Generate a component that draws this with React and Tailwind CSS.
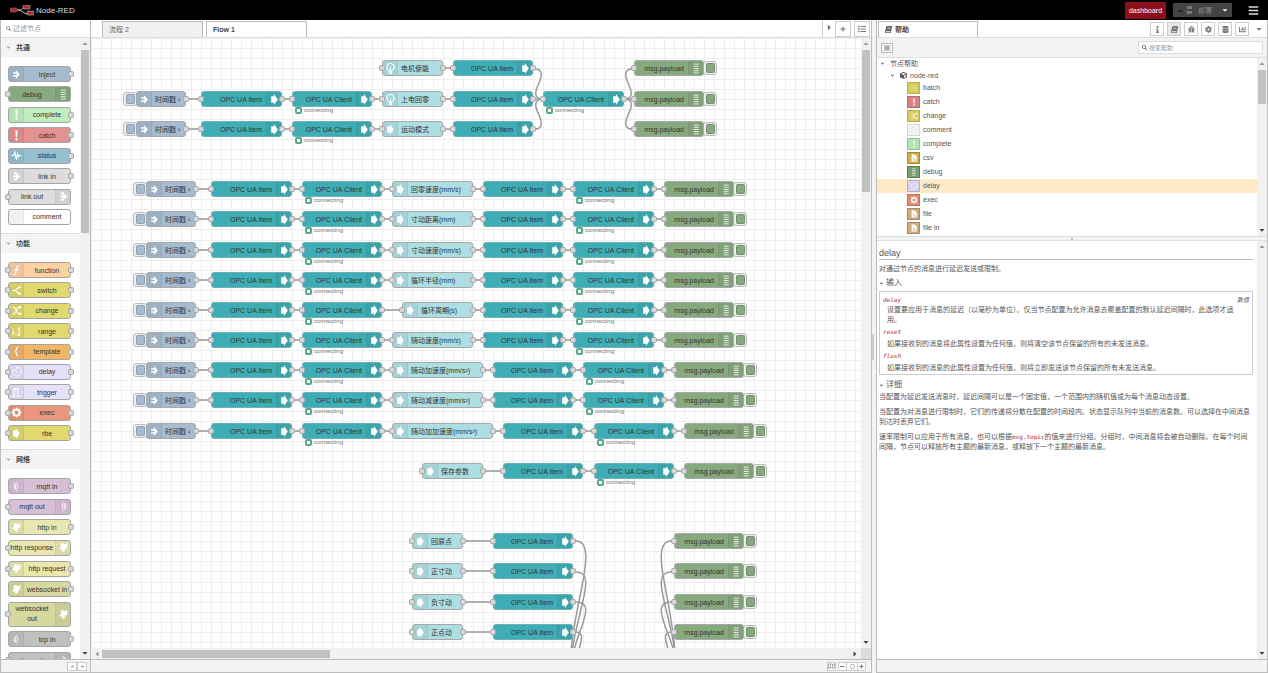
import { useState } from "react"
import { clsx } from "clsx"
import {
    FaAngleDown,
    FaBars,
    FaBook,
    FaBug,
    FaCaretDown,
    FaCaretRight,
    FaChartBar,
    FaCog,
    FaCube,
    FaDatabase,
    FaInfo,
    FaList,
    FaMinus,
    FaPlus,
    FaRegCircle,
    FaRegMap,
    FaSearch,
} from "react-icons/fa"

// One grid cell of the zoomed-out canvas
const CELL = 10.06
const gx = (u) => Math.round(u * CELL - 0.5)
const gy = (v) => Math.round(v * CELL + 0.3)

const TYPES = {
    inject: "bg-[#a6bbcf]",
    debug: "bg-[#87a980]",
    opc: "bg-[#3fadb5]",
    func: "bg-[#addee2]",
}

const item = (u) => ({ type: "opc", label: "OPC UA Item", icon: "arrow", right: true, from: u, to: u + 8 })
const client = (u) => ({ type: "opc", label: "OPC UA Client", icon: "arrow", right: true, from: u, to: u + 8, status: true })
const debug = (u) => ({ type: "debug", label: "msg.payload", icon: "debug", right: true, from: u, to: u + 7, button: true })
const inject = (u) => ({ type: "inject", label: "时间戳 ¹", icon: "inject", from: u, to: u + 5, button: true })
const func = (label, from, to, icon = "arrow") => ({ type: "func", label, icon, from, to })

const speedRow = (v, label, from, to) => ({
    v,
    nodes: [inject(5.5), item(12), client(21), func(label, from, to), item(to + 1), client(to + 10), debug(to + 19)],
})

const ROWS = [
    { v: 3, nodes: [func("电机使能", 29, 35, "bulb"), item(36)] },
    { v: 3, nodes: [debug(54)] },
    { v: 6, nodes: [inject(4.5), item(11), client(20), func("上电回零", 29, 35, "bulb"), item(36), client(45), debug(54)] },
    { v: 9, nodes: [inject(4.5), item(11), client(20), func("运动模式", 29, 35), item(36)] },
    { v: 9, nodes: [debug(54)] },
    speedRow(15, "回零速度(mm/s)", 30, 38),
    speedRow(18, "寸动距离(mm)", 30, 38),
    speedRow(21, "寸动速度(mm/s)", 30, 38),
    speedRow(24, "循环半径(mm)", 30, 38),
    speedRow(27, "循环周期(s)", 31, 38),
    speedRow(30, "随动速度(mm/s)", 30, 38),
    speedRow(33, "随动加速度(mm/s²)", 30, 39),
    speedRow(36, "随动减速度(mm/s²)", 30, 39),
    speedRow(39, "随动加加速度(mm/s³)", 30, 40),
    { v: 43, nodes: [func("保存参数", 33, 39), item(41), client(50), debug(59)] },
    { v: 50, nodes: [func("回原点", 32, 37), item(40)] },
    { v: 50, nodes: [debug(58)] },
    { v: 53, nodes: [func("正寸动", 32, 37), item(40)] },
    { v: 53, nodes: [debug(58)] },
    { v: 56, nodes: [func("负寸动", 32, 37), item(40)] },
    { v: 56, nodes: [debug(58)] },
    { v: 59, nodes: [func("正点动", 32, 37), item(40)] },
    { v: 59, nodes: [debug(58)] },
]

const CURVES = [
    "M444 31C452 31 451 38 448 45C444 53 442 61 452 61",
    "M444 91C452 91 451 84 448 77C444 69 442 61 452 61",
    "M541 31C533 31 534 38 537 45C541 53 543 61 533 61",
    "M541 91C533 91 534 84 537 77C541 69 543 61 533 61",
    "M485 503C499 503 495 528 491 548C487 570 482 588 480 614",
    "M485 534C499 534 495 550 491 567C487 585 483 598 481 614",
    "M485 564C499 564 495 576 491 588C487 598 484 606 483 614",
    "M485 594C493 594 491 602 487 614",
    "M580 503C566 503 570 528 574 548C578 570 582 588 584 614",
    "M580 534C566 534 570 550 574 567C578 585 582 598 584 614",
    "M580 564C566 564 570 576 574 588C578 598 581 606 583 614",
    "M580 594C572 594 574 602 578 614",
]

const CATEGORIES = [
    {
        name: "共通",
        height: "min-h-[159px]",
        nodes: [
            { label: "inject", color: "bg-[#a6bbcf]", icon: "inject", output: true },
            { label: "debug", color: "bg-[#87a980]", icon: "debug", input: true, right: true },
            { label: "complete", color: "bg-[#c0edc0]", icon: "alert", output: true },
            { label: "catch", color: "bg-[#e49191]", icon: "alert", output: true },
            { label: "status", color: "bg-[#94c1d0]", icon: "status", output: true },
            { label: "link in", color: "bg-[#dddddd]", icon: "link", output: true },
            { label: "link out", color: "bg-[#dddddd]", icon: "link", input: true, right: true },
            { label: "comment", color: "bg-white", icon: "comment" },
        ],
    },
    {
        name: "功能",
        height: "min-h-[179px]",
        nodes: [
            { label: "function", color: "bg-[#fdd0a2]", icon: "function", input: true, output: true },
            { label: "switch", color: "bg-[#e2d96e]", icon: "switch", input: true, output: true },
            { label: "change", color: "bg-[#e2d96e]", icon: "change", input: true, output: true },
            { label: "range", color: "bg-[#e2d96e]", icon: "range", input: true, output: true },
            { label: "template", color: "bg-[#f3b567]", icon: "template", input: true, output: true },
            { label: "delay", color: "bg-[#e6e0f8]", icon: "delay", input: true, output: true },
            { label: "trigger", color: "bg-[#e6e0f8]", icon: "trigger", input: true, output: true },
            { label: "exec", color: "bg-[#e9967a]", icon: "exec", input: true, output: true },
            { label: "rbe", color: "bg-[#e2d96e]", icon: "arrow", input: true, output: true },
        ],
    },
    {
        name: "网络",
        height: "min-h-[190px]",
        nodes: [
            { label: "mqtt in", color: "bg-[#d8bfd8]", icon: "bridge", output: true },
            { label: "mqtt out", color: "bg-[#d8bfd8]", icon: "bridgeOut", input: true, right: true },
            { label: "http in", color: "bg-[#e7e7ae]", icon: "globe", output: true },
            { label: "http response", color: "bg-[#e7e7ae]", icon: "globe", input: true, right: true },
            { label: "http request", color: "bg-[#e7e7ae]", icon: "globe", input: true, output: true },
            { label: "websocket in", color: "bg-[#d7d7a0]", icon: "globe", output: true },
            { label: "websocket out", color: "bg-[#d7d7a0]", icon: "globe", input: true, right: true, tall: true },
            { label: "tcp in", color: "bg-[#c0c0c0]", icon: "bridge", output: true },
            { label: "tcp out", color: "bg-[#c0c0c0]", icon: "bridgeOut", input: true, right: true },
        ],
    },
]

const HELP_NODES = [
    { label: "batch", color: "bg-[#d6cd5e] border-[#b9b04a]", icon: "batch" },
    { label: "catch", color: "bg-[#d98484] border-[#b86b6b]", icon: "alert" },
    { label: "change", color: "bg-[#d6cd5e] border-[#b9b04a]", icon: "change" },
    { label: "comment", color: "bg-[#f3f3f3] border-[#d5d5d5]", icon: "comment" },
    { label: "complete", color: "bg-[#b3e2b3] border-[#93c193]", icon: "alert" },
    { label: "csv", color: "bg-[#d0b04a] border-[#a88a2c]", icon: "file" },
    { label: "debug", color: "bg-[#7b9f75] border-[#5a7d55]", icon: "debug" },
    { label: "delay", color: "bg-[#d9d3ee] border-[#b5b0c8]", icon: "delay" },
    { label: "exec", color: "bg-[#e08a70] border-[#b97460]", icon: "exec" },
    { label: "file", color: "bg-[#d2aa78] border-[#a08a70]", icon: "file" },
    { label: "file in", color: "bg-[#d2aa78] border-[#a08a70]", icon: "file" },
]

const GLYPHS = {
    inject: <path fill="currentColor" d="M9 2l7 8-7 8v-4H4v-2.500h6v-3H4V6h5z" />,
    arrow: <path fill="currentColor" d="M4 4h5V0l7 10-7 10v-4H4z" />,
    debug: <path d="M5 2h9M5 6h9M5 10h9M5 14h9M5 18h9" strokeWidth="1.800" opacity=".8" />,
    alert: <path fill="currentColor" stroke="none" d="M8 1h4l-.8 12H8.800zM8.200 15h3.600v4H8.200z" />,
    status: <path d="M1 10h4l2-6 3 14 2-11 2 5 1-2h4" strokeWidth="2" />,
    link: <path fill="currentColor" stroke="none" d="M5 3l5-1 1 3 6 5-6 5-1 3-5-1v-3h4v-2H4V8h5V6H5z" />,
    comment: <path d="M10 4c4.500 0 7.500 2 7.500 5s-3 5-7.500 5c-1 0-2 0-2.500-.3L4 16.500l1-3.500C3.500 12 2.500 10.800 2.500 9c0-3 3-5 7.500-5z" strokeWidth="1.300" />,
    function: <path d="M15 2c-3-1-4.500 1-5 5L8.500 14c-.5 3-2 4.500-4.500 3.500M6 8.500h8" strokeWidth="2" />,
    switch: <path d="M2 10h5c3 0 3-6 10-6M7 10c3 0 3 6 10 6M14 2l3 2-3 2.500M14 13.500l3 2.500-3 2" strokeWidth="2" />,
    change: <path d="M3 4h3c3 0 4 12 8 12h3M3 16h3c3 0 4-12 8-12h3M15 2l3 2-3 2M15 14l3 2-3 2" strokeWidth="2" />,
    range: <path d="M4 8v8M4 4v2M9 13v3M12 5h3v12h-3M15 1v2" strokeWidth="2" />,
    template: <path d="M13 2c-3 0-3 1-3 4 0 2-.5 3.500-3 4 2.500.5 3 2 3 4 0 3 0 4 3 4" strokeWidth="2.200" />,
    delay: (
        <>
            <path d="M5 4.500a8 8 0 1 0 5-2.300v3" strokeWidth="1.500" />
            <path d="M6 7l4 4 2-1" strokeWidth="1.500" />
        </>
    ),
    trigger: <path d="M2 17h4V3h6v14h6" strokeWidth="2" />,
    exec: (
        <>
            <circle cx="10" cy="10" r="5.500" strokeWidth="3.500" />
            <path d="M10 1v3M10 16v3M1 10h3M16 10h3M3.600 3.600l2 2M14.400 14.400l2 2M3.600 16.400l2-2M14.400 5.600l2-2" strokeWidth="2.500" />
        </>
    ),
    bridge: <path d="M12 1c-5 4-5 14 0 18M8 4c-3 3-3 9 0 12M12 6v8" strokeWidth="1.500" />,
    bridgeOut: <path d="M8 1c5 4 5 14 0 18M12 4c3 3 3 9 0 12M8 6v8" strokeWidth="1.500" />,
    globe: <path fill="currentColor" stroke="none" d="M4 4l4-2 3 1 2 2 3-3 2 3-2 3 1 3-4 1v3l-3 3-3-1 1-4-3 1-3-2 2-2 2-2z" />,
    bulb: (
        <>
            <circle cx="10" cy="7.500" r="6.500" strokeWidth="2" />
            <path d="M8 13v6h4v-6M8 16h4M10 8v4" strokeWidth="2" />
        </>
    ),
    batch: <path d="M3 6l4 4-4 4M11 5h5M11 10h5M11 15h5M9 10h2" strokeWidth="1.500" />,
    file: <path fill="currentColor" fillRule="evenodd" stroke="none" d="M4 1h8l5 5v13H4zM7 9v2h3V9zM9 13v3h5v-3z" />,
}

function Glyph({ name, className }) {
    return (
        <svg viewBox="0 0 20 20" fill="none" stroke="currentColor" strokeWidth="0" className={className} aria-hidden="true">
            {GLYPHS[name]}
        </svg>
    )
}

function Port({ side }) {
    return (
        <span
            className={clsx(
                "absolute top-1/2 -mt-[3px] h-[6px] w-[6px] rounded-[2px] border border-[#aaa] bg-[#d9d9d9]",
                side === "left" ? "-left-[4px]" : "-right-[4px]"
            )}
        />
    )
}

function IconStrip({ icon, right, dim }) {
    return (
        <span
            className={clsx(
                "flex w-[15px] shrink-0 items-center justify-center self-stretch bg-black/5",
                dim ? "text-[#ddd]" : "text-white",
                right ? "order-2 rounded-r-[2px] border-l border-black/5" : "rounded-l-[2px] border-r border-black/5"
            )}
        >
            <Glyph name={icon} className="h-[11px] w-[11px]" />
        </span>
    )
}

function FlowNode({ node, v }) {
    const left = gx(node.from)
    const width = gx(node.to) - left
    return (
        <div className="absolute h-[16px]" style={{ left, top: gy(v) - 8, width }}>
            {node.button && (
                <button
                    aria-label={node.label}
                    className={clsx(
                        "absolute top-[1px] flex h-[14px] w-[14px] items-center justify-center rounded-[3px] border border-[#bbb] bg-[#eee]",
                        node.right ? "-right-[13px]" : "-left-[13px]"
                    )}
                >
                    <span className={clsx("h-[10px] w-[9px] rounded-[2px] border border-black/15", TYPES[node.type])} />
                </button>
            )}
            <div
                className={clsx(
                    "relative flex h-full items-center rounded-[3px] border text-[7px] leading-none text-[#333]",
                    TYPES[node.type],
                    node.type === "opc" ? "border-[#6fb0b6]" : "border-[#a5a9a9]"
                )}
            >
                <IconStrip icon={node.icon} right={node.right} />
                <span className={clsx("flex-1 whitespace-nowrap", node.right ? "pr-[4px] text-right" : "pl-[3px]")}>{node.label}</span>
                {node.type !== "inject" && <Port side="left" />}
                {node.type !== "debug" && <Port side="right" />}
            </div>
            {node.status && (
                <div className="ml-[3px] flex items-center gap-[2px] text-[6px] leading-[7px] text-[#777]">
                    <span className="h-[7px] w-[7px] rounded-[2px] border-2 border-[#5a8] bg-white" />
                    connecting
                </div>
            )}
        </div>
    )
}

function Wires() {
    const straight = []
    ROWS.forEach(({ v, nodes }) => {
        for (let i = 1; i < nodes.length; i++) {
            straight.push(`M${gx(nodes[i - 1].to)} ${gy(v)}H${gx(nodes[i].from)}`)
        }
    })
    const lines = Array.from({ length: 200 }, (_, i) => i)
    return (
        <svg className="absolute inset-0 h-full w-full" aria-hidden="true">
            <g fill="#eeeeee">
                {lines.map((i) => (
                    <rect key={`x${i}`} x={gx(i)} y="0" width="1" height="100%" />
                ))}
                {lines.map((i) => (
                    <rect key={`y${i}`} x="0" y={gy(i)} width="100%" height="1" />
                ))}
            </g>
            <g fill="none" stroke="#999" strokeWidth="1.5">
                {[...straight, ...CURVES].map((d) => (
                    <path key={d} d={d} />
                ))}
            </g>
        </svg>
    )
}

function VerticalScrollbar({ thumb }) {
    return (
        <div className="flex w-[10px] shrink-0 flex-col items-center bg-[#f1f1f1]">
            <span className="flex h-[12px] items-center text-[#999]">
                <FaCaretDown className="h-[8px] w-[8px] rotate-180" />
            </span>
            <span className={clsx("w-[8px] bg-[#c1c1c1]", thumb)} />
            <span className="mt-auto flex h-[12px] items-center text-[#444]">
                <FaCaretDown className="h-[8px] w-[8px]" />
            </span>
        </div>
    )
}

function Header() {
    return (
        <header className="flex h-[20px] shrink-0 items-center bg-black text-white">
            <svg viewBox="0 0 24 12" className="ml-[10px] mt-[2px] h-[12px] w-[24px]" aria-hidden="true">
                <path d="M6 5h3c4 0 3-2 5-2M8 5c5 0 5 4 10 4" fill="none" stroke="#bbb" strokeWidth="1" />
                <rect x="0" y="3" width="7" height="4" rx="1" fill="#a03030" stroke="#a66" strokeWidth=".5" />
                <rect x="13" y="0" width="7" height="4" rx="1" fill="#a03030" stroke="#ccc" strokeWidth=".5" />
                <rect x="17" y="6" width="7" height="4" rx="1" fill="#a03030" stroke="#ccc" strokeWidth=".5" />
            </svg>
            <span className="ml-[2px] mt-[2px] text-[8px] leading-none text-[#ddd]">Node-RED</span>
            <div className="ml-auto flex items-center">
                <a href="#dashboard" className="flex h-[17px] w-[41px] items-center justify-center bg-[#8c101c] text-[7px] leading-none text-white">
                    dashboard
                </a>
                <button className="ml-[7px] flex h-[14px] w-[59px] items-center bg-[#444] text-[7px] leading-none text-[#888]">
                    <svg viewBox="0 0 16 10" className="ml-[5px] h-[10px] w-[16px]" aria-hidden="true">
                        <path d="M5 6h3c2 0 1-3 3-3M7 6c2 0 2 2 4 2" fill="none" stroke="#555" />
                        <path d="M0 5h5v2H0z" fill="#222" />
                        <path d="M9 1h5v3H9zM9 6h5v3H9z" fill="#777" />
                    </svg>
                    <span className="ml-[4px]">部署</span>
                    <FaCaretDown className="ml-auto mr-[3px] h-[8px] w-[8px] text-[#ddd]" />
                </button>
                <button aria-label="menu" className="ml-[16px] mr-[9px]">
                    <FaBars className="h-[11px] w-[11px] text-[#ddd]" />
                </button>
            </div>
        </header>
    )
}

function PaletteNode({ node }) {
    return (
        <div
            className={clsx(
                "relative flex w-[63px] items-center rounded-[3px] border border-[#a5a5a5] text-center text-[7px] text-[#333]",
                node.color,
                node.tall ? "h-[25px] leading-[10px]" : "h-[16px] leading-none"
            )}
        >
            <IconStrip icon={node.icon} right={node.right} dim={node.icon === "comment"} />
            <span className={clsx("flex-1", node.tall ? "px-[5px]" : "whitespace-nowrap")}>{node.label}</span>
            {node.input && <Port side="left" />}
            {node.output && <Port side="right" />}
        </div>
    )
}

function Palette() {
    return (
        <aside className="flex w-[91px] shrink-0 flex-col border-x border-[#bbb] bg-[#f3f3f3]">
            <label className="flex h-[18px] shrink-0 items-center border-b border-[#ddd] bg-white pl-[5px] text-[#888]">
                <FaSearch className="h-[5px] w-[5px] shrink-0" />
                <input aria-label="过滤节点" placeholder="过滤节点" className="w-full pl-[2px] text-[7px] leading-none outline-none placeholder:text-[#999]" />
            </label>
            <div className="flex min-h-0 flex-1">
                <div className="flex-1 overflow-hidden bg-white">
                    {CATEGORIES.map((category) => (
                        <section key={category.name}>
                            <h3 className="flex h-[19px] items-center bg-[#f3f3f3] text-[7px] font-bold leading-none text-[#444]">
                                <FaAngleDown className="ml-[5px] mr-[5px] h-[5px] w-[5px] text-[#888]" />
                                {category.name}
                            </h3>
                            <div className="border-b border-[#ddd] pb-[8px] pl-[7px] pt-[9px]">
                                <div className={clsx("flex flex-col justify-between", category.height)}>
                                    {category.nodes.map((node) => (
                                        <PaletteNode key={node.label} node={node} />
                                    ))}
                                </div>
                            </div>
                        </section>
                    ))}
                </div>
                <VerticalScrollbar thumb="h-[183px]" />
            </div>
            <footer className="flex h-[14px] shrink-0 items-center justify-end border-y border-[#bbb] pr-[3px]">
                <button aria-label="collapse all" className="flex h-[9px] w-[10px] items-center justify-center border border-[#ccc] bg-white text-[#777]">
                    <FaAngleDown className="h-[5px] w-[5px] rotate-180" />
                </button>
                <button aria-label="expand all" className="flex h-[9px] w-[10px] items-center justify-center border border-[#ccc] bg-white text-[#777]">
                    <FaAngleDown className="h-[5px] w-[5px]" />
                </button>
            </footer>
        </aside>
    )
}

function Workspace() {
    const [tab, setTab] = useState("Flow 1")
    return (
        <main className="flex min-w-0 flex-1 flex-col border-r border-[#bbb] bg-white">
            <div className="flex h-[18px] shrink-0 items-end border-b border-[#ddd] pl-[11px]">
                {["流程 2", "Flow 1"].map((name) => (
                    <button
                        key={name}
                        onClick={() => setTab(name)}
                        className={clsx(
                            "mr-[3px] h-[16px] w-[101px] border border-b-0 border-[#bbb] pl-[6px] text-left text-[7px] leading-none",
                            tab === name ? "bg-white font-bold text-[#444]" : "bg-[#f0f0f0] text-[#666]"
                        )}
                    >
                        {name}
                    </button>
                ))}
                <div className="ml-auto flex h-full items-end border-l border-[#ccc] text-[#777]">
                    <button aria-label="scroll tabs" className="mb-[5px] w-[12px] pl-[2px]">
                        <FaCaretRight className="h-[9px] w-[9px]" />
                    </button>
                    <button aria-label="add flow" className="flex h-[16px] w-[16px] items-center justify-center border border-[#ccc]">
                        <FaPlus className="h-[6px] w-[6px]" />
                    </button>
                    <button aria-label="list flows" className="ml-[3px] mr-[1px] flex h-[16px] w-[16px] items-center justify-center border border-[#ccc]">
                        <FaList className="h-[8px] w-[8px]" />
                    </button>
                </div>
            </div>
            <div className="flex min-h-0 flex-1">
                <div className="relative flex-1 overflow-hidden">
                    <Wires />
                    {ROWS.map((row, i) => row.nodes.map((node) => <FlowNode key={`${i}-${node.from}`} node={node} v={row.v} />))}
                </div>
                <VerticalScrollbar thumb="h-[142px]" />
            </div>
            <div className="flex h-[11px] shrink-0 items-center bg-[#f1f1f1]">
                <FaCaretRight className="ml-[2px] mr-[1px] h-[8px] w-[8px] rotate-180 text-[#999]" />
                <span className="h-[8px] w-[228px] bg-[#c1c1c1]" />
                <FaCaretRight className="ml-auto mr-[2px] h-[8px] w-[8px] text-[#444]" />
                <span className="h-full w-[10px] bg-[#dcdcdc]" />
            </div>
            <footer className="flex h-[14px] shrink-0 items-center justify-end border-y border-[#bbb] bg-[#f3f3f3] pr-[5px] text-[#777]">
                <button aria-label="navigator" className="mr-[2px] flex h-[9px] w-[9px] items-center justify-center border border-[#ccc] bg-white">
                    <FaRegMap className="h-[6px] w-[7px]" />
                </button>
                <button aria-label="zoom out" className="flex h-[9px] w-[9px] items-center justify-center border border-[#ccc] bg-white">
                    <FaMinus className="h-[5px] w-[5px]" />
                </button>
                <button aria-label="reset zoom" className="flex h-[9px] w-[10px] items-center justify-center border-y border-[#ccc] bg-white">
                    <FaRegCircle className="h-[5px] w-[5px]" />
                </button>
                <button aria-label="zoom in" className="flex h-[9px] w-[9px] items-center justify-center border border-[#ccc] bg-white">
                    <FaPlus className="h-[5px] w-[5px]" />
                </button>
            </footer>
        </main>
    )
}

const SIDE_TABS = [
    { name: "info", Icon: FaInfo },
    { name: "help", Icon: FaBook },
    { name: "debug", Icon: FaBug },
    { name: "config", Icon: FaCog },
    { name: "context", Icon: FaDatabase },
    { name: "dashboard", Icon: FaChartBar },
]

function HelpTree() {
    const [selected, setSelected] = useState("delay")
    return (
        <div className="flex h-[179px] shrink-0 border-t border-[#ddd]">
            <div className="min-w-0 flex-1 overflow-hidden text-[7px] leading-none text-[#555]">
                <div className="flex h-[11px] items-center pl-[3px]">
                    <FaAngleDown className="mr-[5px] h-[5px] w-[5px]" />
                    节点帮助
                </div>
                <div className="flex h-[12px] items-center pl-[13px]">
                    <FaAngleDown className="mr-[5px] h-[5px] w-[5px]" />
                    <FaCube className="mr-[3px] h-[7px] w-[7px]" />
                    node-red
                </div>
                {HELP_NODES.map((node) => (
                    <button
                        key={node.label}
                        onClick={() => setSelected(node.label)}
                        className={clsx("flex h-[14px] w-full items-center pl-[30px]", selected === node.label && "bg-[#ffe9c9]")}
                    >
                        <span className={clsx("mr-[3px] flex h-[12px] w-[13px] items-center justify-center border text-white", node.color)}>
                            <Glyph name={node.icon} className={clsx("h-[8px] w-[8px]", node.icon === "comment" && "text-[#ddd]")} />
                        </span>
                        <span className="pb-[2px]">{node.label}</span>
                    </button>
                ))}
                <div className="pl-[30px] pt-[1px]">
                    <span className="block h-[12px] w-[13px] border border-[#c09060] bg-[#f3b580]" />
                </div>
            </div>
            <VerticalScrollbar thumb="h-[34px]" />
        </div>
    )
}

function HelpHeading({ children }) {
    return (
        <h3 className="flex h-[14px] items-center text-[8px] leading-none">
            <FaAngleDown className="mr-[2px] h-[5px] w-[5px]" />
            {children}
        </h3>
    )
}

function HelpText() {
    return (
        <article className="min-w-0 flex-1 overflow-hidden pl-[2px] pr-[4px] pt-[6px] text-[7px] leading-[10px] text-[#555]">
            <h1 className="h-[13px] border-b border-[#bbb] text-[9px] leading-[12px]">delay</h1>
            <p className="mb-[2px] mt-[4px]">对通过节点的消息进行延迟发送或限制。</p>
            <HelpHeading>输入</HelpHeading>
            <dl className="mb-[3px] mt-[1px] border border-[#ccc] px-[3px] pt-[2px]">
                <dt className="flex h-[11px] items-center justify-between font-['DejaVu_Sans_Mono','Liberation_Mono',monospace] text-[6px] italic text-[#b02a3c]">
                    delay
                    <span className="font-['Liberation_Sans','Noto_Sans_CJK_SC',sans-serif] text-[#555]">数值</span>
                </dt>
                <dd className="mb-[2px] px-[4px]">
                    设置要应用于消息的延迟（以毫秒为单位）。仅当节点配置为允许消息去覆盖配置的默认延迟间隔时，此选项才适用。
                </dd>
                <dt className="h-[12px] font-['DejaVu_Sans_Mono','Liberation_Mono',monospace] text-[6px] italic text-[#b02a3c]">reset</dt>
                <dd className="mb-[2px] px-[4px]">如果接收到的消息将此属性设置为任何值，则将清空该节点保留的所有的未发送消息。</dd>
                <dt className="h-[12px] font-['DejaVu_Sans_Mono','Liberation_Mono',monospace] text-[6px] italic text-[#b02a3c]">flush</dt>
                <dd className="mb-[1px] px-[4px]">如果接收到的消息的此属性设置为任何值，则将立即发送该节点保留的所有未发送消息。</dd>
            </dl>
            <HelpHeading>详细</HelpHeading>
            <p className="mb-[5px]">当配置为延迟发送消息时，延迟间隔可以是一个固定值，一个范围内的随机值或为每个消息动态设置。</p>
            <p className="mb-[5px]">
                当配置为对消息进行限制时，它们的传递将分散在配置的时间段内。状态显示队列中当前的消息数。可以选择在中间消息到达时丢弃它们。
            </p>
            <p>
                速率限制可以应用于所有消息，也可以根据
                <code className="font-['DejaVu_Sans_Mono','Liberation_Mono',monospace] text-[6px] leading-none text-[#b02a3c]">msg.topic</code>
                的值来进行分组。分组时，中间消息将会被自动删除。在每个时间间隔，节点可以释放所有主题的最新消息，或释放下一个主题的最新消息。
            </p>
        </article>
    )
}

function Sidebar() {
    return (
        <aside className="flex w-[392px] shrink-0 flex-col border-x border-[#bbb] bg-white">
            <div className="flex h-[18px] shrink-0 items-end border-b border-[#ddd] pl-[1px] text-[#777]">
                <h2 className="flex h-[16px] w-[100px] items-center border border-b-0 border-[#bbb] pl-[6px] text-[7px] font-bold leading-none text-[#444]">
                    <FaBook className="mr-[3px] h-[7px] w-[7px] -skew-x-12 text-[#666]" />
                    帮助
                </h2>
                <div className="mb-[1px] ml-auto flex gap-[3px]">
                    {SIDE_TABS.map(({ name, Icon }) => (
                        <button
                            key={name}
                            aria-label={name}
                            className={clsx(
                                "flex h-[14px] w-[14px] items-center justify-center border border-[#ccc]",
                                name === "help" && "bg-[#e8e8e8]"
                            )}
                        >
                            <Icon className={clsx("h-[7px] w-[7px]", name === "help" && "-skew-x-12")} />
                        </button>
                    ))}
                    <button aria-label="more tabs" className="ml-[3px] mr-[4px] flex w-[8px] items-center justify-center">
                        <FaCaretDown className="h-[8px] w-[8px]" />
                    </button>
                </div>
            </div>
            <div className="flex h-[19px] shrink-0 items-center justify-between bg-[#f3f3f3] pl-[4px] pr-[4px] text-[#666]">
                <button aria-label="toggle list" className="flex h-[10px] w-[12px] items-center justify-center border border-[#bbb]">
                    <FaBars className="h-[6px] w-[6px]" />
                </button>
                <label className="flex h-[13px] w-[125px] items-center border border-[#ddd] bg-white pl-[3px]">
                    <FaSearch className="h-[5px] w-[5px] shrink-0" />
                    <input aria-label="搜索帮助" placeholder="搜索帮助" className="w-full pl-[2px] text-[6px] leading-none outline-none placeholder:text-[#999]" />
                </label>
            </div>
            <HelpTree />
            <div className="flex h-[5px] shrink-0 items-center justify-center border-y border-[#ddd] bg-[#f3f3f3]">
                <span className="h-[2px] w-[2px] bg-[#bbb]" />
            </div>
            <div className="flex min-h-0 flex-1">
                <HelpText />
                <VerticalScrollbar />
            </div>
            <footer className="h-[14px] shrink-0 border-y border-[#bbb] bg-[#f3f3f3]" />
        </aside>
    )
}

export default function App() {
    return (
        <div className="flex h-screen flex-col overflow-hidden bg-[#f3f3f3] font-['Liberation_Sans','Noto_Sans_CJK_SC',sans-serif]">
            <Header />
            <div className="flex min-h-0 flex-1">
                <Palette />
                <Workspace />
                <div className="flex w-[4px] shrink-0 items-center bg-[#f3f3f3]">
                    <span className="h-[26px] w-[2px] bg-[#ccc]" />
                </div>
                <Sidebar />
            </div>
        </div>
    )
}
